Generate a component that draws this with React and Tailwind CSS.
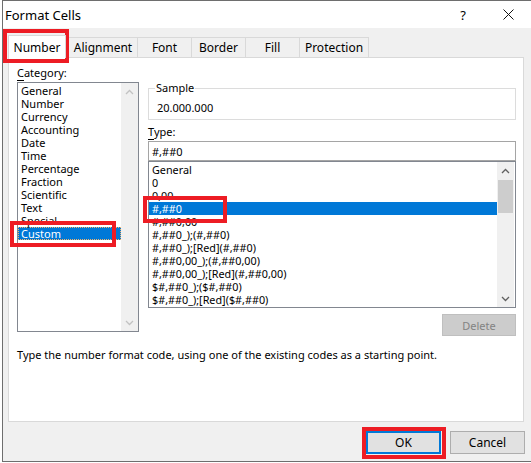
const categories = [
  'General',
  'Number',
  'Currency',
  'Accounting',
  'Date',
  'Time',
  'Percentage',
  'Fraction',
  'Scientific',
  'Text',
  'Special',
  'Custom',
];

const formats = [
  'General',
  '0',
  '0,00',
  '#,##0',
  '#,##0,00',
  '#,##0_);(#,##0)',
  '#,##0_);[Red](#,##0)',
  '#,##0,00_);(#,##0,00)',
  '#,##0,00_);[Red](#,##0,00)',
  '$#,##0_);($#,##0)',
  '$#,##0_);[Red]($#,##0)',
];

const tabs = [
  { label: 'Number', w: 'w-[58px]' },
  { label: 'Alignment', w: 'w-[69px]' },
  { label: 'Font', w: 'w-[54px]' },
  { label: 'Border', w: 'w-[54px]' },
  { label: 'Fill', w: 'w-[54px]' },
  { label: 'Protection', w: 'w-[70px]' },
];

function Chevron( { down, color } ) {
  return (
    <svg width="9" height="6" viewBox="0 0 9 6" fill="none" stroke={ color } strokeWidth="1.3">
      <polyline points={ down ? '1,1 4.5,4.5 8,1' : '1,5 4.5,1.5 8,5' } />
    </svg>
  );
}

function ScrollBar( { thumb, color } ) {
  return (
    <div className="w-[17px] h-full bg-[#f0f0f0] flex flex-col">
      <div className="h-[17px] flex items-center justify-center">
        <Chevron color={ color } />
      </div>
      <div className="flex-1">
        { thumb && <div className="mt-px mx-px h-[33px] bg-[#cdcdcd]" /> }
      </div>
      <div className="h-[17px] flex items-center justify-center">
        <Chevron down color={ color } />
      </div>
    </div>
  );
}

function RedBox( { className } ) {
  return <div className={ `absolute border-4 border-[#ed1c24] pointer-events-none ${ className }` } />;
}

export default function App() {
  return (
    <div className="w-[531px] h-[463px] overflow-hidden bg-white font-['Noto_Sans',sans-serif] text-[11px] leading-[13px] text-black">
      <div className="ml-[2px] w-[540px] h-[462px] border-t border-l border-b border-[#6e6e6e] flex flex-col">
        {/* title bar */}
        <div className="h-[27px] bg-white flex items-center shrink-0">
          <span className="pl-[2px] text-[13px] leading-[18px]">Format Cells</span>
          <span className="ml-auto w-[30px] text-center text-[13px] leading-[18px]">?</span>
          <span className="ml-[7px] mr-[11px] w-[46px] flex items-center justify-center">
            <svg width="11" height="11" viewBox="0 0 11 11" stroke="#111" strokeWidth="1">
              <line x1="0.5" y1="0.5" x2="10.5" y2="10.5" />
              <line x1="10.5" y1="0.5" x2="0.5" y2="10.5" />
            </svg>
          </span>
        </div>

        {/* body */}
        <div className="relative flex-1 bg-[#f0f0f0] pl-[5px] pt-[7px]">
          <div className="h-[22px] flex items-end">
            { tabs.map( ( t, i ) =>
              i === 0 ? (
                <div
                  key={ t.label }
                  className={ `${ t.w } relative top-px z-10 h-[23px] bg-white border border-b-0 border-[#d9d9d9] flex items-center justify-center text-[12px]` }
                >
                  { t.label }
                </div>
              ) : (
                <div
                  key={ t.label }
                  className={ `${ t.w } ${ i === 1 ? 'ml-[2px]' : '' } ${ i === tabs.length - 1 ? 'border-r' : '' } h-[20px] border-l border-t border-[#d9d9d9] flex items-center justify-center text-[12px]` }
                >
                  { t.label }
                </div>
              )
            ) }
          </div>

          {/* panel */}
          <div className="w-[516px] h-[365px] bg-white border border-[#d9d9d9] pt-[7px] pl-[8px]">
            <div className="flex">
              <div className="w-[122px]">
                <div className="h-[16px] leading-[16px]">
                  <span className="border-b border-black">C</span>ategory:
                </div>
                <div className="mt-px h-[250px] border border-[#828790] flex">
                  <div className="flex-1 pt-px">
                    { categories.map( ( c ) =>
                      c === 'Custom' ? (
                        <div key={ c } className="h-[13px] pl-[2px] bg-[#0078d7] text-white border border-dotted border-[#f3b36b] leading-[11px]">
                          { c }
                        </div>
                      ) : (
                        <div key={ c } className="h-[13px] pl-[3px]">{ c }</div>
                      )
                    ) }
                  </div>
                  <ScrollBar color="#c2c2c2" />
                </div>
              </div>

              <div className="ml-[9px] w-[368px]">
                <fieldset className="mt-[15px] border border-[#dcdcdc] pl-[8px] pt-[4px] pb-[3px]">
                  <legend className="ml-[-2px] px-px leading-[16px]">Sample</legend>
                  <div className="leading-[16px]">20.000.000</div>
                </fieldset>

                <div className="mt-[4px] h-[16px] leading-[16px]">
                  <span className="border-b border-black">T</span>ype:
                </div>
                <div className="mt-px h-[20px] border border-[#a5a5a5] pl-[3px] flex items-center">#,##0</div>
                <div className="h-[147px] border border-[#828790] flex">
                  <div className="flex-1 pt-px text-[10.8px]">
                    { formats.map( ( f, i ) => (
                      <div
                        key={ f }
                        className={ `h-[13px] pl-[3px] ${ i === 3 ? 'bg-[#0078d7] text-white' : '' }` }
                      >
                        { f }
                      </div>
                    ) ) }
                  </div>
                  <div className="mr-px">
                    <ScrollBar thumb color="#606060" />
                  </div>
                </div>
                <div className="mt-[6px] flex justify-end">
                  <div className="w-[74px] h-[22px] bg-[#cccccc] border border-[#bfbfbf] text-[#838383] flex items-center justify-center">
                    Delete
                  </div>
                </div>
              </div>
            </div>

            <p className="mt-[11px] leading-[16px]">
              Type the number format code, using one of the existing codes as a starting point.
            </p>
          </div>

          {/* buttons */}
          <div className="w-[517px] mt-[9px] flex justify-end gap-[9px]">
            <button className="w-[75px] h-[23px] bg-[#e1e1e1] border-2 border-[#0078d7] text-[12px]">OK</button>
            <button className="w-[75px] h-[23px] bg-[#e1e1e1] border border-[#adadad] text-[12px]">Cancel</button>
          </div>

          <RedBox className="left-0 top-px w-[66px] h-[34px]" />
          <RedBox className="left-[7px] top-[193px] w-[106px] h-[26px]" />
          <RedBox className="left-[140px] top-[168px] w-[84px] h-[27px]" />
          <RedBox className="left-[359px] top-[399px] w-[84px] h-[32px]" />
        </div>
      </div>
    </div>
  );
}
